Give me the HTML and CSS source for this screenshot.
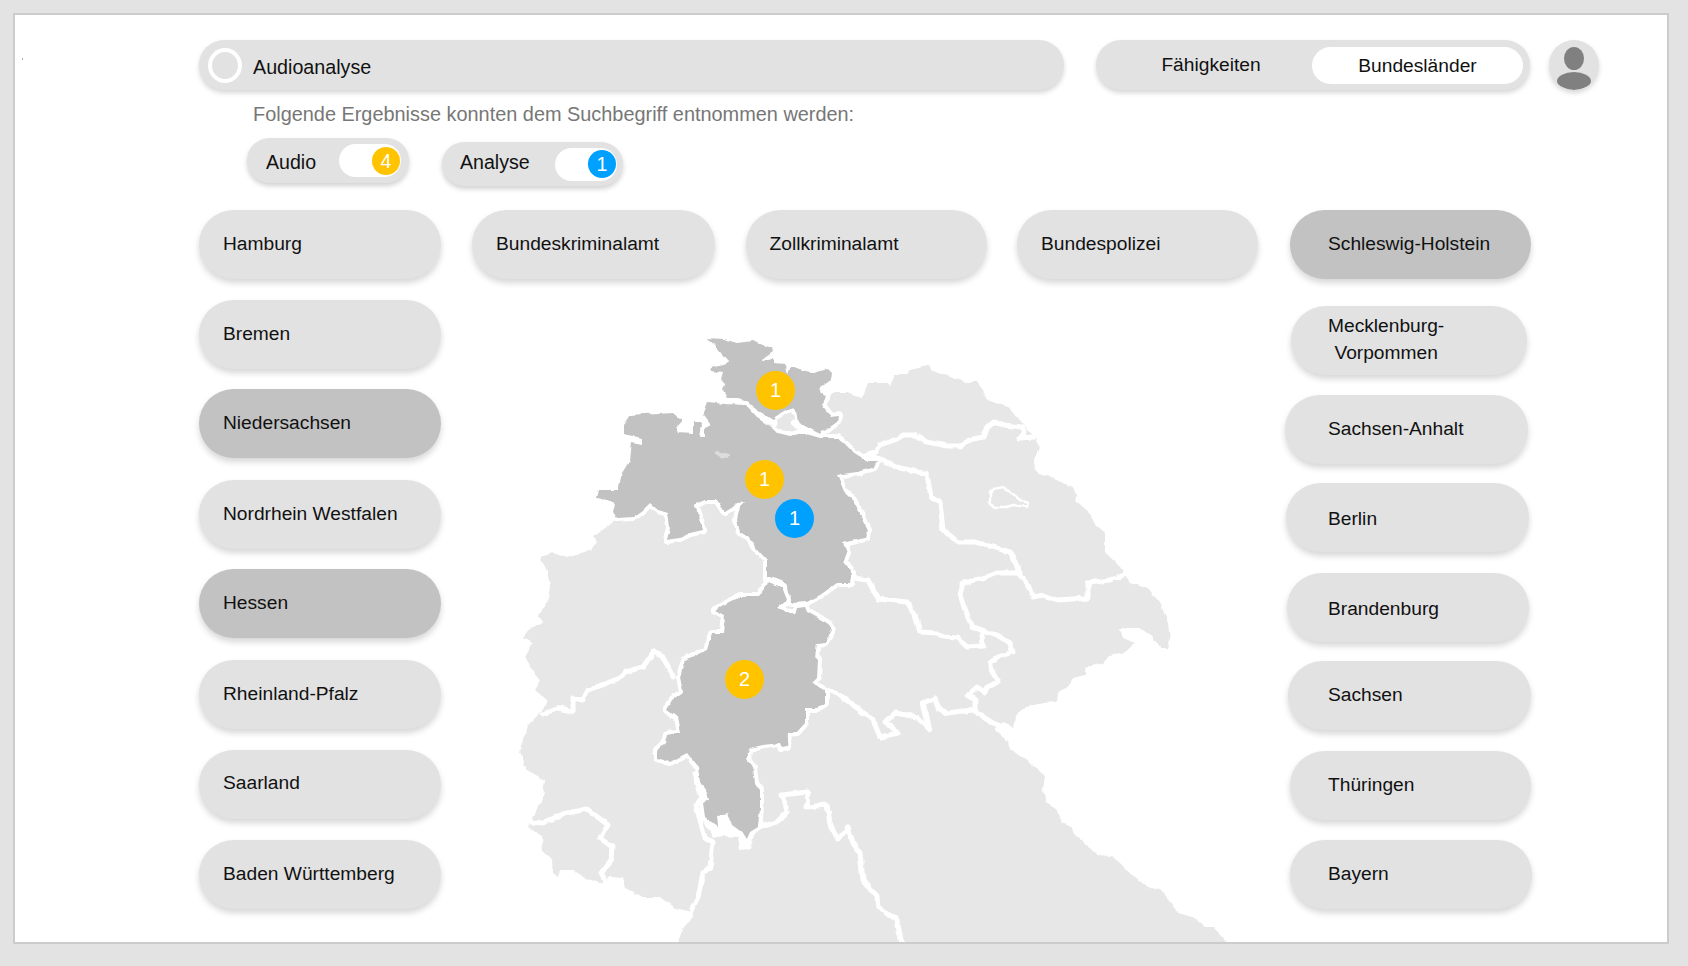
FILE: index.html
```html
<!DOCTYPE html>
<html lang="de">
<head>
  <meta charset="UTF-8">
  <title>Audioanalyse</title>
  <link rel="stylesheet" href="styles.css">
</head>
<body>

<div class="frame">
  <span class="speck"></span>

  <!-- Search and view switch -->
  <header class="topbar">
    <div class="search">
      <span class="search-ring"></span>
      <span class="search-text">Audioanalyse</span>
    </div>
    <div class="switch">
      <span class="switch-off">Fähigkeiten</span>
      <span class="switch-on">Bundesländer</span>
    </div>
    <div class="avatar">
      <svg width="50" height="50" viewBox="0 0 50 50">
        <ellipse cx="25" cy="18.5" rx="10" ry="11.5" fill="#808080"/>
        <ellipse cx="25" cy="41" rx="17" ry="9" fill="#808080"/>
      </svg>
    </div>
  </header>

  <p class="hint">Folgende Ergebnisse konnten dem Suchbegriff entnommen werden:</p>

  <div class="chips">
    <div class="chip chip-audio">
      <span class="chip-label">Audio</span>
      <span class="chip-pill"><span class="count count-yellow">4</span></span>
    </div>
    <div class="chip chip-analyse">
      <span class="chip-label">Analyse</span>
      <span class="chip-pill"><span class="count count-blue">1</span></span>
    </div>
  </div>

  <div class="board">
    <!-- Left states -->
    <div class="col-left">
      <div class="pill">Hamburg</div>
      <div class="pill">Bremen</div>
      <div class="pill pill-active">Niedersachsen</div>
      <div class="pill">Nordrhein Westfalen</div>
      <div class="pill pill-active">Hessen</div>
      <div class="pill">Rheinland-Pfalz</div>
      <div class="pill pill-high">Saarland</div>
      <div class="pill">Baden Württemberg</div>
    </div>

    <!-- Authorities and map -->
    <div class="col-center">
      <div class="authorities">
        <div class="pill">Bundeskriminalamt</div>
        <div class="pill">Zollkriminalamt</div>
        <div class="pill">Bundespolizei</div>
      </div>

      <svg class="map" width="760" height="624" viewBox="500 320 760 624">
        <defs>
          <filter id="rough" filterUnits="userSpaceOnUse" x="500" y="320" width="760" height="640">
            <feTurbulence type="fractalNoise" baseFrequency="0.11" numOctaves="2" seed="4"/>
            <feDisplacementMap in="SourceGraphic" scale="4" xChannelSelector="R" yChannelSelector="G"/>
          </filter>
        </defs>
        <g filter="url(#rough)">
        <polygon class="land" points="540,557 553,553 567,558 590,550 598,543 593,537 617,520 650,480 800,470 820,433 826,400 833,393 847,393 862,398 868,383 887,383 892,385 893,375 907,375 910,369 928,365 935,372 950,377 965,382 977,382 983,390 987,400 1010,408 1028,430 1035,437 1040,448 1033,460 1037,472 1073,487 1077,495 1075,500 1090,513 1097,527 1105,532 1105,552 1123,570 1123,575 1130,582 1148,588 1160,603 1168,623 1170,640 1168,648 1160,648 1153,637 1140,628 1120,628 1123,638 1135,643 1125,652 1110,655 1103,663 1085,668 1085,675 1073,678 1068,687 1058,692 1057,702 1043,703 1023,708 1015,717 1013,727 1003,723 995,728 995,730 1008,742 1010,750 1022,757 1033,765 1045,775 1043,790 1047,803 1057,810 1063,823 1073,828 1075,835 1087,845 1097,855 1113,856 1127,870 1147,887 1160,890 1167,897 1177,913 1192,917 1193,917 1205,927 1213,927 1223,937 1232,956 674,956 683,927 693,917 690,912 673,907 660,897 643,897 625,888 623,878 610,877 600,883 582,877 575,870 560,870 558,877 553,873 552,860 543,852 542,835 528,827 533,817 543,797 545,780 527,770 520,753 528,725 543,710 547,700 535,690 540,680 533,670 525,657 533,643 523,637 530,628 543,622 538,615 547,603 550,587 547,572"/>

        <!-- borders between the light states -->
        <polyline class="border" points="865,456 877,452 880,445 900,438 903,435 913,435 927,442 947,446 960,446 973,439 983,437 987,428 995,421 1003,425 1022,427 1025,432 1020,438 1033,437"/>
        <polyline class="border" points="870,455 883,460 900,468 918,472 927,474 931,497 940,503 943,530 958,542 975,542 1010,552 1020,572"/>
        <polyline class="border" points="1018,573 1028,585 1033,597 1043,595 1057,600 1088,598 1088,583 1110,580 1123,575"/>
        <polyline class="border" points="853,578 868,580 878,599 907,602 915,615 920,632 937,633 943,637 958,638 967,647 983,646 982,635"/>
        <polyline class="border" points="1018,573 997,573 987,577 963,583 960,595 965,610 972,627 982,630 997,635 1010,643 1013,652 998,657 990,662 990,668 998,682 987,687 985,692 977,687 968,695 975,700 975,710"/>
        <polyline class="border" points="827,690 840,695 853,705 873,720 880,737 898,733 886,722 895,713 917,717 930,730 923,703 935,698 938,708 947,713 973,710 993,723 1003,727"/>
        <polyline class="border" points="543,714 560,708 573,712 573,698 583,700 588,690 620,678 625,672 643,667 654,651 663,657 673,677"/>
        <polyline class="border" points="695,773 702,798 696,805 705,838 713,842 710,867 703,873 698,897 690,913"/>
        <polyline class="border" points="530,822 543,823 563,814 587,809 608,825 600,838 612,847 611,860 601,873 605,882"/>
        <polyline class="border" points="758,827 767,825 777,822 787,812 784,798 781,795 808,792 807,807 827,805 830,823 838,840 848,827 853,843 860,853 863,880 877,897 878,907 897,920 903,950"/>
        <polygon class="gap" points="703,820 713,838 723,836 738,837 740,850 750,849 754,835 763,828 750,815 720,805"/>

        <!-- selected states -->
        <polygon class="state" points="708,338 723,339 737,343 753,341 768,347 772,347 773,351 762,359 763,361 773,357 775,363 785,364 786,370 787,373 790,367 793,367 813,373 828,369 832,373 831,380 821,387 820,392 826,397 822,405 831,417 838,416 837,422 830,427 822,431 820,434 803,425 797,419 796,410 787,411 774,420 757,410 747,402 737,398 727,398 723,391 725,384 721,380 723,373 711,371 712,367 727,363 728,361"/>
        <polygon class="state" points="708,402 725,404 745,405 757,418 773,428 778,433 790,436 803,433 820,438 838,438 843,442 853,452 867,461 877,461 872,468 857,472 843,474 837,475 843,490 853,500 862,517 868,530 865,538 843,543 847,553 843,562 852,573 850,583 837,583 820,595 807,602 793,603 788,600 787,585 782,580 772,577 767,580 767,560 758,550 748,537 740,532 737,520 740,507 745,502 737,503 733,507 725,512 717,500 705,500 693,505 698,512 703,530 690,533 680,538 667,540 670,527 668,513 658,510 650,503 643,510 633,517 617,518 613,512 615,503 607,500 597,498 599,490 618,490 622,473 630,460 632,443 642,445 642,438 623,434 623,425 630,415 657,413 673,412 682,420 676,427 678,432 693,433 693,422 700,422 702,425 700,437 705,437 705,428 711,425 703,415"/>
        <polygon class="state" points="768,582 782,587 787,600 778,608 795,615 797,608 805,607 807,612 827,623 832,630 825,642 817,643 815,657 818,660 817,678 812,683 825,690 825,703 817,708 805,708 805,723 797,732 788,733 787,747 782,748 780,743 763,745 750,748 747,760 753,768 755,783 760,790 760,807 758,827 750,832 747,839 743,833 732,825 728,813 717,815 718,827 705,817 703,803 709,800 707,793 700,782 698,767 687,753 670,762 657,758 657,750 665,743 667,735 680,732 677,717 667,710 672,700 683,692 680,677 685,660 707,650 712,633 723,633 725,615 715,610 730,602 740,597 758,597 767,585"/>

        <!-- Hamburg, Bremen, Berlin -->
        <polygon class="city" points="777,418 787,412 793,410 796,418 792,423 800,430 793,433 782,432 775,427"/>
        <polygon class="bremen" points="713,452 718,451 729,454 728,458 720,457"/>
        <polygon class="city city-thin" points="990,492 993,489 1003,487 1013,494 1020,500 1028,503 1027,507 1013,505 1007,507 993,507 990,502"/>
        </g>
      </svg>

      <span class="pin pin-yellow pin-sh">1</span>
      <span class="pin pin-yellow pin-ni">1</span>
      <span class="pin pin-blue pin-ni2">1</span>
      <span class="pin pin-yellow pin-he">2</span>
    </div>

    <!-- Right states -->
    <div class="col-right">
      <div class="pill pill-active">Schleswig-Holstein</div>
      <div class="pill pill-two">Mecklenburg-<br>Vorpommen</div>
      <div class="pill">Sachsen-Anhalt</div>
      <div class="pill pill-low">Berlin</div>
      <div class="pill pill-low">Brandenburg</div>
      <div class="pill">Sachsen</div>
      <div class="pill">Thüringen</div>
      <div class="pill">Bayern</div>
    </div>
  </div>
</div>

</body>
</html>
```

FILE: styles.css
```css
* {
  box-sizing: border-box;
}
body {
  margin: 0;
  height: 966px;
  overflow: hidden;
  background-color: #e3e3e3;
  font-family: "Liberation Sans", Arial, sans-serif;
  font-size: 19.2px;
  color: #111;
}
.frame {
  position: relative;
  width: 1656px;
  height: 931px;
  margin: 13px;
  padding: 25px 0 0 184px;
  border: 2px solid #ccc;
  background-color: #fff;
  overflow: hidden;
}
.speck {
  position: absolute;
  left: 7px;
  top: 43px;
  width: 1px;
  height: 2px;
  background-color: #aaa;
}

/* Top bar */
.topbar {
  display: flex;
  height: 50px;
}
.search {
  display: flex;
  align-items: center;
  gap: 11px;
  width: 865px;
  padding-left: 9px;
  border-radius: 25px;
  background-color: #e2e2e2;
  box-shadow: 0 3px 5px rgba(0, 0, 0, 0.16);
}
.search-ring {
  width: 34px;
  height: 35px;
  border: 4px solid #fff;
  border-radius: 50%;
}
.search-text {
  padding-top: 4px;
  font-size: 19.7px;
}
.switch {
  display: flex;
  align-items: center;
  width: 434px;
  margin-left: 32px;
  border-radius: 25px;
  background-color: #e2e2e2;
  box-shadow: 0 3px 5px rgba(0, 0, 0, 0.16);
}
.switch-off {
  width: 216px;
  padding-left: 14px;
  text-align: center;
}
.switch-on {
  width: 211px;
  height: 37px;
  line-height: 37px;
  border-radius: 19px;
  background-color: #fff;
  text-align: center;
}
.avatar {
  width: 50px;
  height: 50px;
  margin-left: 19px;
  border-radius: 50%;
  background-color: #e2e2e2;
  box-shadow: 0 3px 5px rgba(0, 0, 0, 0.16);
  overflow: hidden;
}

.hint {
  margin: 12px 0 0 54px;
  font-size: 19.9px;
  line-height: 24px;
  color: #777;
}

/* Search term chips */
.chips {
  display: flex;
  align-items: flex-start;
  gap: 33px;
  height: 48px;
  margin: 12px 0 0 48px;
}
.chip {
  display: flex;
  align-items: center;
  justify-content: space-between;
  border-radius: 23px;
  background-color: #e2e2e2;
  box-shadow: 0 3px 5px rgba(0, 0, 0, 0.18);
}
.chip-label {
  font-size: 19.6px;
}
.chip-audio {
  width: 162px;
  height: 45px;
  padding: 0 8px 0 19px;
}
.chip-audio .chip-label {
  padding-top: 4px;
}
.chip-analyse {
  width: 181px;
  height: 44px;
  margin-top: 4px;
  padding: 0 6px 0 18px;
}
.chip-analyse .chip-label {
  padding-bottom: 4px;
}
.chip-pill {
  display: flex;
  align-items: center;
  justify-content: flex-end;
  width: 62px;
  height: 33px;
  padding-right: 1px;
  border-radius: 17px;
  background-color: #fff;
}
.count {
  width: 28px;
  height: 28px;
  line-height: 28px;
  border-radius: 50%;
  text-align: center;
  font-size: 19.6px;
  color: #fff;
}
.count-yellow {
  background-color: #ffc300;
}
.count-blue {
  background-color: #00a0ff;
}

/* State and authority buttons */
.board {
  display: grid;
  grid-template-columns: 243px 843px 247px;
  margin-top: 24px;
}
.pill {
  display: flex;
  align-items: center;
  height: 69px;
  padding-left: 24px;
  padding-bottom: 1px;
  border-radius: 35px;
  background-color: #e2e2e2;
  box-shadow: 0 4px 6px rgba(0, 0, 0, 0.16);
}
.pill-active {
  background-color: #c2c2c2;
}
.col-left {
  display: flex;
  flex-direction: column;
  gap: 21px;
}
.col-left .pill {
  width: 242px;
}
.col-left .pill-active {
  margin-top: -1px;
  margin-bottom: 1px;
}
.col-left .pill-high {
  padding-bottom: 4px;
}
.col-center {
  position: relative;
}
.authorities {
  display: grid;
  grid-template-columns: 243px 241px 241px;
  column-gap: 30.5px;
  padding-left: 30px;
}

.col-right .pill:nth-child(1) { margin-left: 5px; width: 241px; padding-left: 38px; }
.col-right .pill:nth-child(2) { margin: 27px 0 0 6px; width: 236px; height: 69px; padding-left: 37px; padding-bottom: 4px; }
.col-right .pill:nth-child(3) { margin: 20px 0 0 0; width: 243px; padding-left: 43px; }
.col-right .pill:nth-child(4) { margin: 19px 0 0 1px; width: 243px; padding-left: 42px; }
.col-right .pill:nth-child(5) { margin: 21px 0 0 2px; width: 242px; padding-left: 41px; }
.col-right .pill:nth-child(6) { margin: 19px 0 0 3px; width: 243px; padding-left: 40px; }
.col-right .pill:nth-child(7) { margin: 21px 0 0 5px; width: 241px; padding-left: 38px; }
.col-right .pill:nth-child(8) { margin: 20px 0 0 5px; width: 242px; padding-left: 38px; }
.pill-two {
  line-height: 27px;
  text-align: center;
}
.pill-low {
  padding-top: 2px;
  padding-bottom: 0;
}

/* Map */
.map {
  position: absolute;
  left: 58px;
  top: 110px;
}
.land {
  fill: #e7e7e7;
}
.border {
  fill: none;
  stroke: #fff;
  stroke-width: 5;
  stroke-linejoin: round;
  stroke-linecap: round;
}
.gap {
  fill: #fff;
}
.state {
  fill: #c2c2c2;
  stroke: #fff;
  stroke-width: 8;
  stroke-linejoin: round;
  paint-order: stroke;
}
.city {
  fill: #e7e7e7;
  stroke: #fff;
  stroke-width: 3;
  stroke-linejoin: round;
}
.city-thin {
  stroke-width: 2.5;
}
.bremen {
  fill: #dcdcdc;
}
.pin {
  position: absolute;
  width: 39px;
  height: 39px;
  line-height: 39px;
  border-radius: 50%;
  text-align: center;
  font-size: 20px;
  color: #fff;
}
.pin-yellow {
  background-color: #ffc300;
}
.pin-blue {
  background-color: #00a0ff;
}
.pin-sh { left: 314px; top: 161px; }
.pin-ni { left: 303px; top: 250px; }
.pin-ni2 { left: 333px; top: 289px; }
.pin-he { left: 283px; top: 450px; }
```
